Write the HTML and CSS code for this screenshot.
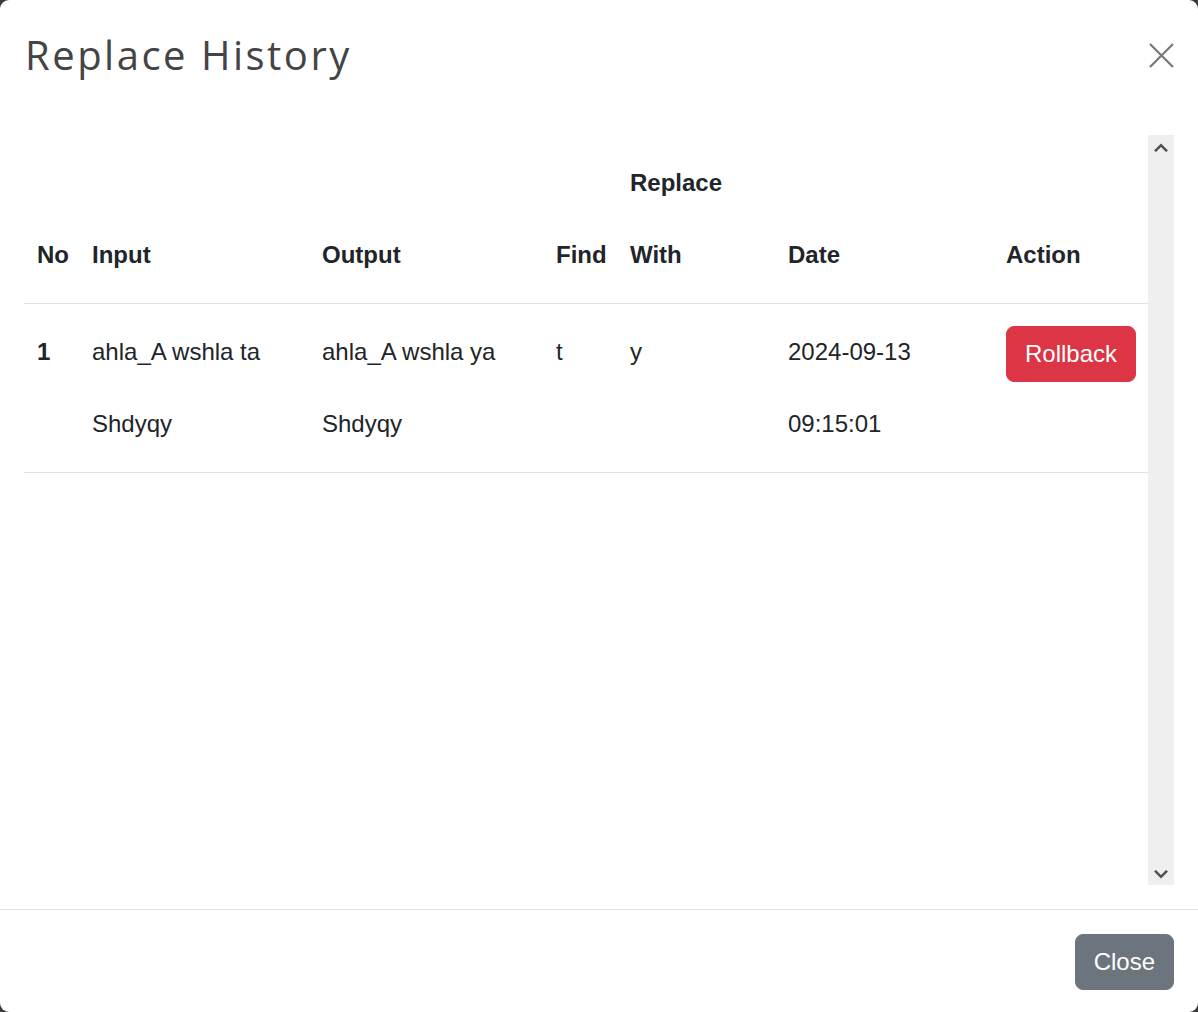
FILE: index.html
```html
<!DOCTYPE html>
<html>
<head>
<meta charset="utf-8">
<title>Replace History</title>
<link rel="stylesheet" href="styles.css">
</head>
<body>
<div class="modal">
  <div class="modal-header">
    <h1 class="modal-title">Replace History</h1>
    <button class="btn-close" aria-label="Close">
      <svg width="26" height="26" viewBox="0 0 26 26"><path d="M2 2 L25 25 M25 2 L2 25" stroke="#777" stroke-width="2.2" fill="none"/></svg>
    </button>
  </div>
  <div class="modal-body">
    <div class="scroll">
      <div class="table-wrap">
        <table class="table">
          <colgroup>
            <col class="c-no"><col class="c-in"><col class="c-out"><col class="c-find"><col class="c-with"><col class="c-date"><col class="c-act">
          </colgroup>
          <thead>
            <tr class="head-top">
              <th></th><th></th><th></th><th></th><th>Replace</th><th></th><th></th>
            </tr>
            <tr class="head-main">
              <th>No</th><th>Input</th><th>Output</th><th>Find</th><th>With</th><th>Date</th><th>Action</th>
            </tr>
          </thead>
          <tbody>
            <tr>
              <td class="bold">1</td>
              <td>ahla_A wshla ta Shdyqy</td>
              <td>ahla_A wshla ya Shdyqy</td>
              <td>t</td>
              <td>y</td>
              <td>2024-09-13 09:15:01</td>
              <td><button class="btn btn-danger">Rollback</button></td>
            </tr>
          </tbody>
        </table>
      </div>
      <div class="scrollbar">
        <svg class="arrow" width="16" height="12" viewBox="0 0 16 12"><path d="M1 9.5 L8 2.5 L15 9.5 L13 11 L8 6 L3 11 Z" fill="#505050"/></svg>
        <svg class="arrow" width="16" height="12" viewBox="0 0 16 12"><path d="M1 2.5 L8 9.5 L15 2.5 L13 1 L8 6 L3 1 Z" fill="#505050"/></svg>
      </div>
    </div>
  </div>
  <div class="modal-footer">
    <button class="btn btn-secondary">Close</button>
  </div>
</div>
</body>
</html>
```
FILE: styles.css
```css
html, body {
  margin: 0;
  padding: 0;
  background: #3a3a3a;
}
body {
  font-family: "Liberation Sans", Arial, sans-serif;
  color: #212529;
  font-size: 24px;
}
.modal {
  width: 1198px;
  height: 1012px;
  background: #fff;
  border-radius: 9px;
  display: flex;
  flex-direction: column;
  overflow: hidden;
}
.modal-header {
  height: 111px;
  box-sizing: border-box;
  padding: 24px 24px 0 25px;
  display: flex;
  justify-content: space-between;
  align-items: flex-start;
}
.modal-title {
  margin: 0;
  font-family: "Open Sans", "DejaVu Sans", sans-serif;
  font-weight: 400;
  font-size: 40px;
  line-height: 62px;
  color: #444;
  letter-spacing: 2.5px;
}
.btn-close {
  border: 0;
  background: transparent;
  padding: 0;
  margin-top: 18px;
  width: 26px;
  height: 26px;
  display: flex;
}
.modal-body {
  padding: 24px 24px 24px 24px;
  height: 798px;
  box-sizing: border-box;
}
.scroll {
  display: flex;
  height: 750px;
}
.table-wrap {
  flex: 1;
}
.scrollbar {
  width: 26px;
  background: #efefef;
  display: flex;
  flex-direction: column;
  justify-content: space-between;
  align-items: center;
  padding: 6px 0 4px;
  box-sizing: border-box;
}
.table {
  width: 100%;
  border-collapse: collapse;
  table-layout: fixed;
}
.c-no { width: 56px; }
.c-in { width: 230px; }
.c-out { width: 234px; }
.c-find { width: 74px; }
.c-with { width: 158px; }
.c-date { width: 218px; }
.c-act { width: 154px; }
th, td {
  text-align: left;
  padding: 0 12px;
  vertical-align: top;
}
th {
  font-weight: 700;
  line-height: 24px;
}
.head-top th {
  padding-top: 36px;
  padding-bottom: 12px;
}
.head-main th {
  padding-top: 36px;
  padding-bottom: 36px;
}
.head-main th:first-child { padding-left: 13px; }
tbody tr {
  border-top: 1px solid #dee2e6;
  border-bottom: 1px solid #dee2e6;
}
td {
  line-height: 72px;
  padding-top: 12px;
  padding-bottom: 12px;
}
td:first-child { padding-left: 13px; }
.bold { font-weight: 700; }
.btn {
  font-family: "Liberation Sans", Arial, sans-serif;
  font-size: 24px;
  line-height: 36px;
  padding: 9px 18px;
  border: 1px solid transparent;
  border-radius: 8px;
  color: #fff;
  display: inline-block;
}
.btn-danger {
  background: #dc3545;
  border-color: #dc3545;
  vertical-align: middle;
  margin-top: 1px;
}
.btn-secondary {
  background: #6c757d;
  border-color: #6c757d;
}
.modal-footer {
  border-top: 1px solid #dee2e6;
  flex: 1;
  display: flex;
  justify-content: flex-end;
  align-items: flex-start;
  padding: 24px 24px 0;
}
```
